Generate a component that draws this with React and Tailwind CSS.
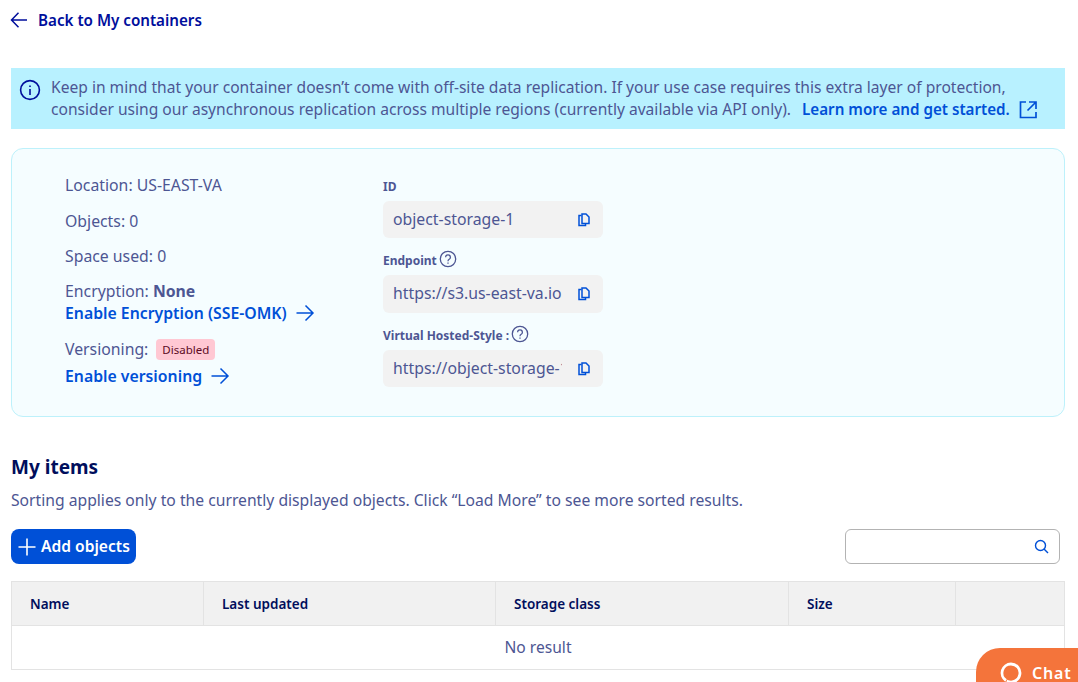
import React from "react";

function ArrowRight() {
    return (
        <svg width="20" height="20" viewBox="0 0 20 20" fill="none" stroke="currentColor" strokeWidth="1.5" className="ml-2 shrink-0">
            <path d="M1.5 10H18M10.5 2.5L18 10L10.5 17.5" />
        </svg>
    );
}

function CopyIcon() {
    return (
        <svg width="14" height="14" viewBox="0 0 14 14" fill="none" stroke="#0050d7" strokeWidth="1.5" className="shrink-0">
            <path d="M4.5 2.5H2v10h6.5V10.5" />
            <path d="M5 1h4l3 3v6.5H5z" />
        </svg>
    );
}

function HelpIcon() {
    return (
        <svg width="18" height="18" viewBox="0 0 18 18" fill="none" stroke="#4d5693" strokeWidth="1.3" className="mb-[4px] ml-0.5 shrink-0">
            <circle cx="9" cy="9" r="7.7" />
            <path d="M6.6 7.2a2.4 2.4 0 1 1 3.6 2.1c-.8.5-1.2.9-1.2 1.9" />
            <path d="M9 12.6v1.1" />
        </svg>
    );
}

function CopyField({ label, value, help, className, height }) {
    return (
        <div className={className}>
            <div className="flex h-[18px] items-center text-[12px] font-bold text-[#4d5693]">
                {label}
                {help && <HelpIcon />}
            </div>
            <div className={`mt-[5px] flex w-[220px] items-center justify-between rounded-md bg-[#f2f2f2] pl-[10px] pr-[12px] ${height}`}>
                <span className="w-[169px] overflow-hidden whitespace-nowrap text-[15.8px] text-[#4d5693]">{value}</span>
                <CopyIcon />
            </div>
        </div>
    );
}

function Th({ children, className }) {
    return <th className={`border-r border-[#e3e3e3] pl-[18px] pt-[2px] text-left text-[13.5px] font-semibold text-[#000e5c] ${className}`}>{children}</th>;
}

export default function App() {
    return (
        <div className="relative h-[682px] w-[1078px] overflow-hidden bg-white pl-[11px] pr-[13px] font-['Noto_Sans','sans-serif'] text-[#4d5693]">
            <a className="flex h-[40px] items-center text-[15.2px] font-semibold text-[#000e9c]">
                <svg width="18" height="18" viewBox="0 0 18 18" fill="none" stroke="currentColor" strokeWidth="1.5" className="mr-[10px] -ml-[1px]">
                    <path d="M17 9H1.5M8.5 1.8L1.5 9l7 7.2" />
                </svg>
                Back to My containers
            </a>

            <div className="mt-[28px] flex h-[61px] bg-[#b8f1ff] pl-[8px] pt-[8px] text-[15.6px] leading-[22px]">
                <svg width="22" height="22" viewBox="0 0 22 22" fill="none" stroke="#000e9c" strokeWidth="1.6" className="mt-[3px] shrink-0">
                    <circle cx="11" cy="11" r="9.4" />
                    <path d="M11 10v6M11 6.4v1.6" />
                </svg>
                <div className="ml-[10px] whitespace-nowrap">
                    <div>Keep in mind that your container doesn’t come with off-site data replication. If your use case requires this extra layer of protection,</div>
                    <div className="flex items-center">
                        consider using our asynchronous replication across multiple regions (currently available via API only).
                        <span className="ml-[11px] text-[15.2px] font-semibold text-[#0050d7]">Learn more and get started.</span>
                        <svg width="19" height="19" viewBox="0 0 19 19" fill="none" stroke="#0050d7" strokeWidth="1.7" className="ml-[9px]">
                            <path d="M7 2H1.5v15.5h15.5V12M10 2h7v7M17 2L8.5 10.5" />
                        </svg>
                    </div>
                </div>
            </div>

            <div className="mt-[19px] flex h-[269px] rounded-xl border border-[#bdf1fb] bg-[#f5fdff] pl-[53px] pt-[25px]">
                <div className="w-[318px] text-[15.8px] leading-[22px]">
                    <div>Location: US-EAST-VA</div>
                    <div className="mt-[14px]">Objects: 0</div>
                    <div className="mt-[13px]">Space used: 0</div>
                    <div className="mt-[13px]">Encryption: <b>None</b></div>
                    <div className="flex items-center font-semibold text-[#0050d7]">Enable Encryption (SSE-OMK)<ArrowRight /></div>
                    <div className="mt-[14px] flex items-center">
                        Versioning:
                        <span className="ml-[8px] rounded bg-[#ffc8d3] px-[6px] text-[11.5px] leading-[21px] text-[#5c0a24]">Disabled</span>
                    </div>
                    <div className="mt-[5px] flex items-center font-semibold text-[#0050d7]">Enable versioning<ArrowRight /></div>
                </div>
                <div className="mt-[4px]">
                    <CopyField label="ID" value="object-storage-1" height="h-[37px]" />
                    <CopyField label="Endpoint" value="https://s3.us-east-va.io" help height="h-[38px]" className="mt-[14px]" />
                    <CopyField label="Virtual Hosted-Style :" value="https://object-storage-1.s3" help height="h-[37px]" className="mt-[14px]" />
                </div>
            </div>

            <h2 className="mt-[36px] text-[19px] font-bold leading-[28px] text-[#000e5c]">My items</h2>
            <p className="mt-[8px] text-[15.7px] leading-[22px]">Sorting applies only to the currently displayed objects. Click “Load More” to see more sorted results.</p>

            <div className="mt-[18px] flex items-center justify-between">
                <button className="flex h-[35px] w-[125px] items-center rounded-lg bg-[#0050d7] pl-[6px] text-[15.6px] font-semibold text-white">
                    <svg width="20" height="20" viewBox="0 0 20 20" fill="none" stroke="currentColor" strokeWidth="1.6" className="mr-[4px] shrink-0">
                        <path d="M10 1.5v17M1.5 10h17" />
                    </svg>
                    Add objects
                </button>
                <div className="mr-[5px] flex h-[35px] w-[215px] items-center justify-end rounded-md border border-[#b3b3b3] bg-white pr-[10px]">
                    <svg width="15" height="15" viewBox="0 0 15 15" fill="none" stroke="#0050d7" strokeWidth="1.4">
                        <circle cx="6.5" cy="6.5" r="5" />
                        <path d="M10 10l4 4" />
                    </svg>
                </div>
            </div>

            <table className="mt-[17px] w-[1054px] table-fixed border-collapse border border-[#e3e3e3]">
                <thead>
                    <tr className="h-[44px] border-b border-[#e3e3e3] bg-[#f1f1f1]">
                        <Th className="w-[192px]">Name</Th>
                        <Th className="w-[292px]">Last updated</Th>
                        <Th className="w-[293px]">Storage class</Th>
                        <Th className="w-[167px]">Size</Th>
                        <th />
                    </tr>
                </thead>
                <tbody>
                    <tr className="h-[44px]">
                        <td colSpan={5} className="text-center text-[15.6px]">No result</td>
                    </tr>
                </tbody>
            </table>

            <div className="absolute left-[976px] top-[648px] flex h-[50px] w-[120px] items-start rounded-tl-[24px] bg-[#f4743b] pl-[24px] pt-[14px] text-white">
                <svg width="22" height="24" viewBox="0 0 22 24" fill="none" stroke="currentColor" strokeWidth="2.8" className="shrink-0">
                    <path d="M11 2a9 9 0 1 1-3 17.5l-1 3.5" />
                    <path d="M11 2a9 9 0 0 0-5 16.5" />
                </svg>
                <span className="ml-[10px] text-[16px] font-semibold leading-[22px] tracking-[0.8px]">Chat</span>
            </div>
        </div>
    );
}
